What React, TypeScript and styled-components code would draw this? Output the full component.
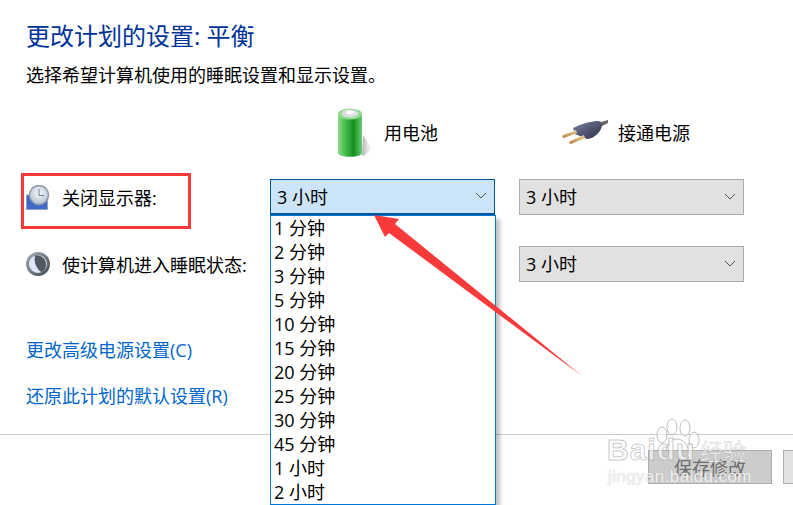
import styled, { createGlobalStyle } from 'styled-components';

const GlobalStyle = createGlobalStyle`
  html, body {
    margin: 0;
    background: #fff;
  }
  body {
    font-family: "Open Sans", "Noto Sans CJK SC", sans-serif;
    color: #000;
  }
`;

const Page = styled.div`
  position: relative;
  width: 793px;
  height: 505px;
  overflow: hidden;
  background: #fff;
  display: flex;
  flex-direction: column;
`;

const Content = styled.div`
  padding: 20px 49px 0 26px;
  display: flex;
  flex-direction: column;
`;

const Title = styled.h1`
  margin: 0;
  font-size: 24px;
  font-weight: 400;
  line-height: 32px;
  color: #003399;
`;

const Subtitle = styled.p`
  margin: 11px 0 0;
  font-size: 18px;
  line-height: 24px;
`;

const Grid = styled.div`
  display: grid;
  grid-template-columns: 220px 225px 225px;
  column-gap: 24px;
  align-items: center;
`;

const HeaderRow = styled(Grid)`
  height: 50px;
  margin-top: 20px;
`;

const PowerHead = styled.div<{ $indent: number; $gap: number }>`
  display: flex;
  align-items: center;
  gap: ${({ $gap }) => $gap}px;
  padding-left: ${({ $indent }) => $indent}px;
  font-size: 18px;
`;

const SettingRow = styled(Grid)<{ $top: number }>`
  height: 36px;
  margin-top: ${({ $top }) => $top}px;
`;

const RowLabel = styled.div`
  display: grid;
  grid-template-columns: 36px auto;
  align-items: center;
  font-size: 18px;
  white-space: nowrap;
`;

const Combo = styled.div<{ $active?: boolean }>`
  box-sizing: border-box;
  height: 36px;
  display: flex;
  align-items: center;
  justify-content: space-between;
  padding: 0 7px 2px 6px;
  font-size: 18px;
  background: ${({ $active }) => ($active ? '#cce4f7' : '#e1e1e1')};
  border: 1px solid ${({ $active }) => ($active ? '#005499' : '#adadad')};
  ${({ $active }) => $active && 'border-bottom-width: 2px;'}
`;

const Chevron = () => (
  <svg width="12" height="7" viewBox="0 0 12 7" fill="none">
    <path d="M1 1l5 5 5-5" stroke="#555" strokeWidth="1" />
  </svg>
);

const LinkList = styled.div`
  display: flex;
  flex-direction: column;
  gap: 22px;
  margin-top: 56px;
`;

const LinkItem = styled.a`
  font-size: 18px;
  line-height: 24px;
  color: #0066cc;
  text-decoration: none;
`;

const Divider = styled.div`
  height: 1px;
  margin-top: 26px;
  background: #cccccc;
`;

const Footer = styled.div`
  display: flex;
  gap: 11px;
  padding: 15px 0 0 648px;
`;

const FooterButton = styled.div<{ $disabled?: boolean }>`
  box-sizing: border-box;
  flex: none;
  width: 124px;
  height: 34px;
  display: flex;
  align-items: center;
  justify-content: center;
  font-size: 18px;
  color: #6d6d6d;
  background: ${({ $disabled }) => ($disabled ? '#cccccc' : '#e1e1e1')};
  border: 1px solid #adadad;
`;

const DropList = styled.ul`
  position: absolute;
  left: 270px;
  top: 215px;
  box-sizing: border-box;
  width: 226px;
  height: 290px;
  margin: 0;
  padding: 0;
  list-style: none;
  background: #fff;
  border: 1px solid #0078d7;
  box-shadow: 4px 4px 4px rgba(0, 0, 0, 0.25);
`;

const DropItem = styled.li`
  height: 24px;
  padding-left: 3px;
  font-size: 18px;
  line-height: 24px;
`;

const RedBox = styled.div`
  position: absolute;
  left: 21px;
  top: 173px;
  box-sizing: border-box;
  width: 170px;
  height: 56px;
  border: 3px solid #f83a3a;
  pointer-events: none;
`;

const ArrowMark = styled.svg`
  position: absolute;
  left: 370px;
  top: 210px;
`;

const Watermark = styled.div`
  position: absolute;
  left: 606px;
  top: 428px;
  width: 187px;
  height: 77px;
  pointer-events: none;
`;

const WmPaw = styled.svg`
  position: absolute;
  left: 48px;
  top: -10px;
`;

const WmBrand = styled.div`
  position: absolute;
  left: 1px;
  top: 5px;
  font-family: "Liberation Sans", sans-serif;
  font-size: 30px;
  font-weight: 700;
  line-height: 34px;
  letter-spacing: 1px;
  color: rgba(255, 255, 255, 0.65);
  -webkit-text-stroke: 1px rgba(150, 150, 150, 0.5);
  white-space: nowrap;
`;

const WmCn = styled.div`
  position: absolute;
  left: 94px;
  top: 9px;
  font-size: 23px;
  line-height: 28px;
  color: rgba(255, 255, 255, 0.75);
  -webkit-text-stroke: 0.5px rgba(150, 150, 150, 0.55);
  white-space: nowrap;
`;

const WmUrl = styled.div`
  position: absolute;
  left: 2px;
  top: 39px;
  font-family: "Liberation Sans", sans-serif;
  font-size: 17px;
  line-height: 20px;
  letter-spacing: 0.4px;
  color: rgba(255, 255, 255, 0.85);
  text-shadow: 0 0 1px rgba(150, 150, 150, 0.7);
  white-space: nowrap;
`;

const BatteryIcon = () => (
  <svg width="42" height="50" viewBox="0 0 42 50">
    <defs>
      <linearGradient id="batBody" x1="0" x2="1" y1="0" y2="0">
        <stop offset="0" stopColor="#8adb8a" />
        <stop offset="0.3" stopColor="#45bd50" />
        <stop offset="0.65" stopColor="#14901f" />
        <stop offset="1" stopColor="#6bcb72" />
      </linearGradient>
      <linearGradient id="batShadow" x1="0" x2="1" y1="0" y2="0">
        <stop offset="0" stopColor="#999" stopOpacity="0.8" />
        <stop offset="1" stopColor="#ccc" stopOpacity="0" />
      </linearGradient>
    </defs>
    <path d="M27 28l9 14-7 6-3 1z" fill="url(#batShadow)" />
    <path d="M2 7v39c0 2.200 5.400 3.800 12 3.800s12-1.600 12-3.800V7z" fill="url(#batBody)" />
    <ellipse cx="14" cy="7" rx="12" ry="5.500" fill="#8fdc8f" />
    <ellipse cx="14" cy="6.500" rx="8.500" ry="4" fill="#dcdce4" />
    <ellipse cx="14" cy="5.500" rx="4" ry="2" fill="#fff" />
  </svg>
);

const PlugIcon = () => (
  <svg width="46" height="26" viewBox="0 0 46 26">
    <defs>
      <linearGradient id="plugBody" x1="0" x2="1" y1="0" y2="1">
        <stop offset="0" stopColor="#7a80a0" />
        <stop offset="1" stopColor="#2c2f46" />
      </linearGradient>
      <linearGradient id="pin" x1="0" x2="0" y1="0" y2="1">
        <stop offset="0" stopColor="#f4d9a4" />
        <stop offset="1" stopColor="#b4803c" />
      </linearGradient>
    </defs>
    <path d="M39 3l7-2v3l-6 3z" fill="#666" />
    <path d="M11 9c6-3 14-6 24-7 3 0 6 1 5 5-1 5-5 9-10 12l-5 1-12-5z" fill="url(#plugBody)" />
    <path d="M1 16l13-5 1 3-13 5c-2 0-2-2-1-3z" fill="url(#pin)" />
    <path d="M8 22l14-6 1 3-14 6c-2 0-2-2-1-3z" fill="url(#pin)" />
  </svg>
);

const ClockIcon = () => (
  <svg width="25" height="25" viewBox="0 0 25 25">
    <defs>
      <radialGradient id="clockFace" cx="0.5" cy="0.4" r="0.6">
        <stop offset="0" stopColor="#f6f8fb" />
        <stop offset="1" stopColor="#b3c3d4" />
      </radialGradient>
    </defs>
    <rect x="0.500" y="10" width="21" height="14.500" fill="#3f68c8" stroke="#8fa3c8" strokeWidth="1" />
    <circle cx="13" cy="10" r="9.500" fill="url(#clockFace)" stroke="#8d99a5" strokeWidth="1.500" />
    <path d="M13 4v6.500h5" fill="none" stroke="#6f7c8a" strokeWidth="1" />
  </svg>
);

const MoonIcon = () => (
  <svg width="24" height="24" viewBox="0 0 24 24">
    <defs>
      <linearGradient id="moonRim" x1="0" x2="1" y1="0" y2="1">
        <stop offset="0" stopColor="#a8b2ba" />
        <stop offset="1" stopColor="#3d464f" />
      </linearGradient>
    </defs>
    <circle cx="12" cy="12" r="12" fill="url(#moonRim)" />
    <circle cx="12" cy="12" r="9" fill="#dfe6f6" />
    <path d="M9 3.500c5-1 11 2.500 11 9 0 4-2 7-5 7.500-3-2-5-6-6-9-.5-2.500-.5-5 0-7.500z" fill="#52585f" />
  </svg>
);

const rows = ['1 分钟', '2 分钟', '3 分钟', '5 分钟', '10 分钟', '15 分钟', '20 分钟', '25 分钟', '30 分钟', '45 分钟', '1 小时', '2 小时'];

const App = () => (
  <Page>
    <GlobalStyle />
    <Content>
      <Title>更改计划的设置: 平衡</Title>
      <Subtitle>选择希望计算机使用的睡眠设置和显示设置。</Subtitle>
      <HeaderRow>
        <span />
        <PowerHead $indent={66} $gap={6}>
          <BatteryIcon />
          用电池
        </PowerHead>
        <PowerHead $indent={43} $gap={10}>
          <PlugIcon />
          接通电源
        </PowerHead>
      </HeaderRow>
      <SettingRow $top={22}>
        <RowLabel>
          <ClockIcon />
          关闭显示器:
        </RowLabel>
        <Combo $active>
          3 小时
          <Chevron />
        </Combo>
        <Combo>
          3 小时
          <Chevron />
        </Combo>
      </SettingRow>
      <SettingRow $top={31}>
        <RowLabel>
          <MoonIcon />
          使计算机进入睡眠状态:
        </RowLabel>
        <Combo>
          3 小时
          <Chevron />
        </Combo>
        <Combo>
          3 小时
          <Chevron />
        </Combo>
      </SettingRow>
      <LinkList>
        <LinkItem>更改高级电源设置(C)</LinkItem>
        <LinkItem>还原此计划的默认设置(R)</LinkItem>
      </LinkList>
    </Content>
    <Divider />
    <Footer>
      <FooterButton $disabled>保存修改</FooterButton>
      <FooterButton />
    </Footer>
    <DropList>
      {rows.map((row) => (
        <DropItem key={row}>{row}</DropItem>
      ))}
    </DropList>
    <RedBox />
    <ArrowMark width="220" height="175" viewBox="0 0 220 175">
      <path d="M4 5L29 9 25 14 212 166 19 23 15 27z" fill="#f83a3a" />
    </ArrowMark>
    <Watermark>
      <WmPaw width="46" height="38" viewBox="0 0 46 38" fill="rgba(255,255,255,.55)" stroke="rgba(150,150,150,.6)">
        <ellipse cx="8" cy="17" rx="5" ry="8" />
        <ellipse cx="18" cy="9" rx="5" ry="8" />
        <ellipse cx="31" cy="10" rx="5" ry="8" />
        <ellipse cx="40" cy="22" rx="5" ry="8" />
        <path d="M12 34c0-7 5-13 11-13s11 6 12 13" fill="none" />
      </WmPaw>
      <WmBrand>Baidu</WmBrand>
      <WmCn>经验</WmCn>
      <WmUrl>jingyan.baidu.com</WmUrl>
    </Watermark>
  </Page>
);

export default App;
